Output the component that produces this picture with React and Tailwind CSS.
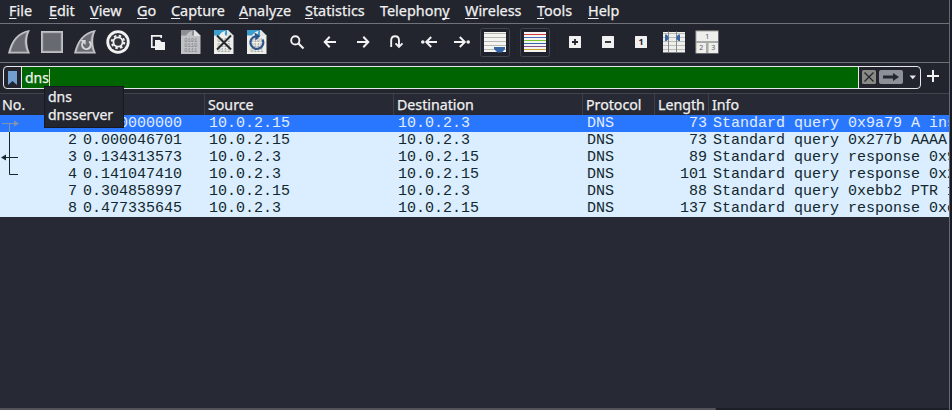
import React from "react";

const menus = [
  ["", "F", "ile", "w-[40px]"],
  ["", "E", "dit", "w-[41px]"],
  ["", "V", "iew", "w-[47px]"],
  ["", "G", "o", "w-[34px]"],
  ["", "C", "apture", "w-[68px]"],
  ["", "A", "nalyze", "w-[66px]"],
  ["", "S", "tatistics", "w-[75px]"],
  ["Telephon", "y", "", "w-[85px]"],
  ["", "W", "ireless", "w-[72px]"],
  ["", "T", "ools", "w-[51px]"],
  ["", "H", "elp", "w-[40px]"],
];

const packets = [
  ["1", "0.000000000", "10.0.2.15", "10.0.2.3", "73", "Standard query 0x9a79 A ins"],
  ["2", "0.000046701", "10.0.2.15", "10.0.2.3", "73", "Standard query 0x277b AAAA "],
  ["3", "0.134313573", "10.0.2.3", "10.0.2.15", "89", "Standard query response 0x9"],
  ["4", "0.141047410", "10.0.2.3", "10.0.2.15", "101", "Standard query response 0x2"],
  ["7", "0.304858997", "10.0.2.15", "10.0.2.3", "88", "Standard query 0xebb2 PTR 1"],
  ["8", "0.477335645", "10.0.2.3", "10.0.2.15", "137", "Standard query response 0xe"],
];

// Each toolbar glyph is drawn in a 33x38 cell centred on (16.5, 18).
function Cell({ children }) {
  return (
    <svg width="33" height="38" viewBox="0 0 33 38" className="shrink-0" fill="none">
      {children}
    </svg>
  );
}

function Gap() {
  return (
    <div className="flex h-[30px] w-[7px] shrink-0 justify-center">
      <div className="w-px bg-[#1f212b]" />
    </div>
  );
}

function Fin() {
  return (
    <>
      <path d="M6 29.5 C9 17 15 8 28 6 C24 13 24.5 22 28 29.5 Z" fill="#c3c5c8" />
      <path d="M8.7 27.8 C11 18 16 11 24.8 8.5 C22 14 22.3 22 25.2 27.8 Z" fill="#6a6c74" stroke="#8a8c92" strokeWidth=".6" />
    </>
  );
}

function Doc({ head, page, ink }) {
  return (
    <>
      <path d="M7 6 H21 L26.5 11.5 V30 H7 Z" fill={page} />
      <path d="M7 6 H20 V11.5 H7 Z" fill={head} />
      <path d="M12 12 C13.5 9 15.5 7.5 18.5 7 C17.5 9 17.7 10.5 18.5 12 Z" fill={page} />
      <path d="M20 6 L26.5 12 H20 Z" fill="#e2e4e1" />
      <g fill={ink} fontFamily="Liberation Mono, monospace" fontSize="5.4">
        <text x="10.2" y="18">0101</text>
        <text x="10.2" y="23">0110</text>
        <text x="10.2" y="28">0111</text>
      </g>
    </>
  );
}

function Toggle({ children }) {
  return (
    <>
      <rect x="2.5" y="4.5" width="29" height="28" rx="2" fill="#20222d" stroke="#44464e" />
      <rect x="6" y="8" width="22" height="20" fill="#f4f4f2" />
      {children}
    </>
  );
}

const stripes = ["#d43a3a", "#4a6db5", "#7ac52d", "#3465a4", "#80518b", "#c9a227"];

function Toolbar() {
  return (
    <div className="flex h-[38px] w-[950px] items-center pl-[2px]">
      <Cell><Fin /></Cell>
      <Cell>
        <rect x="6" y="7" width="22" height="22" fill="#bfc1c4" />
        <rect x="8" y="9" width="18" height="18" fill="#686a72" stroke="#8a8c92" strokeWidth=".6" />
      </Cell>
      <Cell>
        <Fin />
        <path d="M21.2 17.5 A4.3 4.3 0 1 1 15 18.2" stroke="#d6d7da" strokeWidth="2" />
        <path d="M12.4 16 H17.6 V21 Z" fill="#d6d7da" />
      </Cell>
      <Cell>
        <circle cx="17" cy="18" r="11.7" fill="#f2f2f2" />
        <circle cx="17" cy="18" r="8.9" fill="#33343a" />
        <circle cx="17" cy="18" r="6.2" stroke="#f2f2f2" strokeWidth="2" strokeDasharray="2.435 2.435" />
        <circle cx="17" cy="18" r="4.6" fill="#33343a" stroke="#f2f2f2" strokeWidth="1.8" />
      </Cell>
      <Gap />
      <Cell>
        <path d="M14 23.2 H10.8 V11.8 H20.2 V14" stroke="#f2f2f2" strokeWidth="1.7" />
        <path d="M14 16 H19 L20.5 18 H24 V26 H14 Z" fill="#f2f2f2" />
      </Cell>
      <Cell><Doc head="#8d8f95" page="#bfc1c5" ink="#7d8085" /></Cell>
      <Cell>
        <Doc head="#3c9fd0" page="#eeeeea" ink="#91948f" />
        <path d="M10 11.5 L24 25.5 M24 11.5 L10 25.5" stroke="#252a2e" strokeWidth="2" />
      </Cell>
      <Cell>
        <Doc head="#3c9fd0" page="#eeeeea" ink="#91948f" />
        <path d="M22.5 15.4 A6.4 6.4 0 1 1 15.5 12.2" stroke="#2c568b" strokeWidth="2.2" />
        <path d="M14.5 8.5 L20.5 12 L15.5 16.5 Z" fill="#2c568b" />
      </Cell>
      <Gap />
      <Cell>
        <circle cx="15.3" cy="16.4" r="4.1" stroke="#f2f2f2" strokeWidth="1.9" />
        <path d="M18.2 19.3 L23.5 24.5" stroke="#f2f2f2" strokeWidth="2.2" />
      </Cell>
      <Cell><path d="M23 18 H12 M16.7 12.8 L11.7 18 L16.7 23.2" stroke="#f2f2f2" strokeWidth="2" /></Cell>
      <Cell><path d="M11 18 H22 M17.3 12.8 L22.3 18 L17.3 23.2" stroke="#f2f2f2" strokeWidth="2" /></Cell>
      <Cell><path d="M12.2 23 V16.5 C12.2 10.8 20 10.8 20 16.5 V22 M16.5 19.4 L20 23 L23.5 19.4" stroke="#f2f2f2" strokeWidth="1.9" /></Cell>
      <Cell>
        <path d="M25 18 H15 M19.2 13 L14.2 18 L19.2 23" stroke="#f2f2f2" strokeWidth="2" />
        <circle cx="10.8" cy="18" r="1.8" fill="#f2f2f2" />
      </Cell>
      <Cell>
        <path d="M9 18 H19 M14.8 13 L19.8 18 L14.8 23" stroke="#f2f2f2" strokeWidth="2" />
        <circle cx="23.2" cy="18" r="1.8" fill="#f2f2f2" />
      </Cell>
      <Cell>
        <Toggle>
          {[9.5, 13.5, 17.5, 21.5, 25.5].map((y) => <path key={y} d={`M6 ${y} H28`} stroke="#b8b8b3" />)}
          <path d="M16 23 H27 V25 L24 28.5 H19.5 L16 25 Z" fill="#3465a4" />
        </Toggle>
      </Cell>
      <Gap />
      <Cell>
        <Toggle>
          {stripes.map((c, i) => <path key={c} d={`M6 ${10.5 + i * 3} H28`} stroke={c} />)}
        </Toggle>
      </Cell>
      <Gap />
      <Cell>
        <rect x="11" y="12" width="12" height="12" rx=".5" fill="#f0f0f0" />
        <path d="M14 18 H20 M17 15 V21" stroke="#22242e" strokeWidth="1.8" />
      </Cell>
      <Cell>
        <rect x="11" y="12" width="12" height="12" rx=".5" fill="#f0f0f0" />
        <path d="M14 18 H20" stroke="#22242e" strokeWidth="1.8" />
      </Cell>
      <Cell>
        <rect x="11" y="12" width="12" height="12" rx=".5" fill="#f0f0f0" />
        <text x="17" y="21.2" textAnchor="middle" fontSize="9" fontWeight="bold" fill="#22242e">1</text>
      </Cell>
      <Cell>
        <rect x="6" y="8" width="22" height="20.5" fill="#eeeeec" />
        {[9.5, 13.5, 17.5, 21.5, 25.5].map((y) => <path key={y} d={`M6 ${y} H28`} stroke="#babdb6" />)}
        <path d="M11.5 7.5 V28.5 M19.5 7.5 V28.5" stroke="#888a85" />
        <path d="M8 10.5 H9.5 L11.5 12.5 V15 L9.5 17 H8 Z M23 10.5 H21.5 L19.5 12.5 V15 L21.5 17 H23 Z" fill="#3465a4" />
      </Cell>
      <Cell>
        <rect x="5.5" y="6.5" width="23" height="23" fill="#a8aaa6" />
        <path d="M6.5 7.5 H28 V17 H6.5 Z M6.5 19 H16 V29 H6.5 Z M18.5 19 H28 V29 H18.5 Z" fill="#eeeeec" />
        <g fill="#55575a" fontSize="7" textAnchor="middle">
          <text x="17.3" y="15">1</text>
          <text x="11.3" y="26.3">2</text>
          <text x="23.3" y="26.3">3</text>
        </g>
      </Cell>
    </div>
  );
}

function FilterBar() {
  return (
    <div className="flex h-[30px] items-start pl-[3px] pt-[3px]">
      <div className="flex h-[23px] w-[918px] rounded-[4px] border border-[#e6e7e8] bg-[#22242e]">
        <div className="flex w-[17px] shrink-0 items-center justify-center">
          <svg width="9" height="14" viewBox="0 0 9 14"><path d="M0 0 H9 V14 L4.5 10 L0 14 Z" fill="#729fcf" /></svg>
        </div>
        <div className="relative flex w-[838px] shrink-0 items-center border-x border-[#e6e7e8] bg-[#006400] pl-[3px]">
          <span className="text-[14px] leading-[20px] text-[#f0f4f0]">dns</span>
          <span className="h-[18px] w-px bg-[#cfdccf]" />
          <div className="absolute left-[22px] top-[19px] z-10 h-[42px] w-[80px] border border-[#171922] bg-[#23252f] pl-[3px] pt-px text-[14px] leading-[18px] text-[#f0f0f0]">
            <div>dns</div>
            <div>dnsserver</div>
          </div>
        </div>
        <div className="flex items-center pl-[3px]">
          <svg width="14" height="15" viewBox="0 0 14 15">
            <rect y="0" width="14" height="14" rx="1.5" fill="#888a85" />
            <path d="M2.5 2.5 L11.5 11.5 M11.5 2.5 L2.5 11.5" stroke="#25282c" strokeWidth="1.3" />
          </svg>
          <svg width="24" height="15" viewBox="0 0 24 15" className="ml-[3px]">
            <rect width="24" height="14" rx="2" fill="#8e9097" />
            <path d="M4 5.5 H14 V3 L20 7 L14 11 V8.5 H4 Z" fill="#24272f" />
          </svg>
          <svg width="8" height="5" viewBox="0 0 8 5" className="ml-[6px]"><path d="M.5 .5 H7 L3.8 4.2 Z" fill="#e8e8e8" /></svg>
        </div>
      </div>
      <svg width="12" height="12" viewBox="0 0 12 12" className="ml-[6px] mt-[4px]">
        <path d="M0 6 H12 M6 0 V12" stroke="#f2f2f2" strokeWidth="2" />
      </svg>
    </div>
  );
}

function PacketList() {
  const head = "flex h-full items-center border-l border-[#3d4049] pl-[3px]";
  return (
    <div className="relative w-[949px] overflow-hidden">
      <div className="flex h-[22px] border-t border-[#42444c] bg-[#272a34] text-[14.2px] text-[#f0f0f0] [-webkit-text-stroke:0.25px]">
        <div className="flex w-[204px] shrink-0 items-center pl-[2px]">No.</div>
        <div className={`${head} w-[189px] shrink-0`}>Source</div>
        <div className={`${head} w-[189px] shrink-0`}>Destination</div>
        <div className={`${head} w-[72px] shrink-0`}>Protocol</div>
        <div className={`${head} w-[54px] shrink-0`}>Length</div>
        <div className={`${head} grow`}>Info</div>
      </div>
      <div className="font-['Liberation_Mono',monospace] text-[15px] leading-[17px]">
        {packets.map(([no, time, src, dst, len, info], i) => (
          <div key={no} className={i === 0 ? "flex h-[17px] whitespace-pre bg-[#2977ff] text-[#e1edff]" : "flex h-[17px] whitespace-pre bg-[#daeeff] text-[#12272e]"}>
            <div className="w-[77px] shrink-0 text-right">{no}</div>
            <div className="w-[132px] shrink-0 pl-[6px]">{time}</div>
            <div className="w-[189px] shrink-0">{src}</div>
            <div className="w-[189px] shrink-0">{dst}</div>
            <div className="w-[60px] shrink-0">DNS</div>
            <div className="w-[60px] shrink-0 text-right">{len}</div>
            <div className="shrink-0 pl-[6px]">{info}</div>
          </div>
        ))}
      </div>
      <svg width="22" height="68" viewBox="0 0 22 68" className="absolute left-0 top-[22px]" fill="none">
        <path d="M2 8.5 H15 M9.5 9 V17" stroke="#8494ae" />
        <path d="M14 5.5 L19 8.5 L14 11.5 Z" fill="#8494ae" />
        <path d="M9.5 17 V59.5 H18 M5 42.5 H18" stroke="#12272e" />
        <path d="M6 39.5 L1 42.5 L6 45.5 Z" fill="#12272e" />
      </svg>
    </div>
  );
}

export default function App() {
  return (
    <div className="flex h-[410px] w-[952px] overflow-hidden bg-[#181b25] font-['Noto_Sans',sans-serif]">
      <div className="flex w-[950px] shrink-0 flex-col border-r border-[#666973] bg-[#272a34]">
        <div className="flex h-[24px] shrink-0 border-b border-[#70727a] bg-[#22242e] pl-[9px] text-[14.4px] leading-[22px] text-[#f0f0f0] [-webkit-text-stroke:0.25px]">
          {menus.map(([a, u, b, w]) => (
            <div key={a + u + b} className={`${w} shrink-0 whitespace-nowrap`}>
              {a}<span className="underline decoration-1 underline-offset-[2px] [text-decoration-skip-ink:none]">{u}</span>{b}
            </div>
          ))}
        </div>
        <div className="h-[39px] shrink-0 border-b border-[#70727a] bg-[#22242e]"><Toolbar /></div>
        <div className="h-[30px] shrink-0 bg-[#22242e] [-webkit-text-stroke:0.25px]"><FilterBar /></div>
        <PacketList />
        <div className="grow" />
        <div className="flex h-[2px] shrink-0 bg-[#1c1e28]">
          <div className="w-[716px] rounded-r bg-[#55535a]" />
        </div>
      </div>
    </div>
  );
}
